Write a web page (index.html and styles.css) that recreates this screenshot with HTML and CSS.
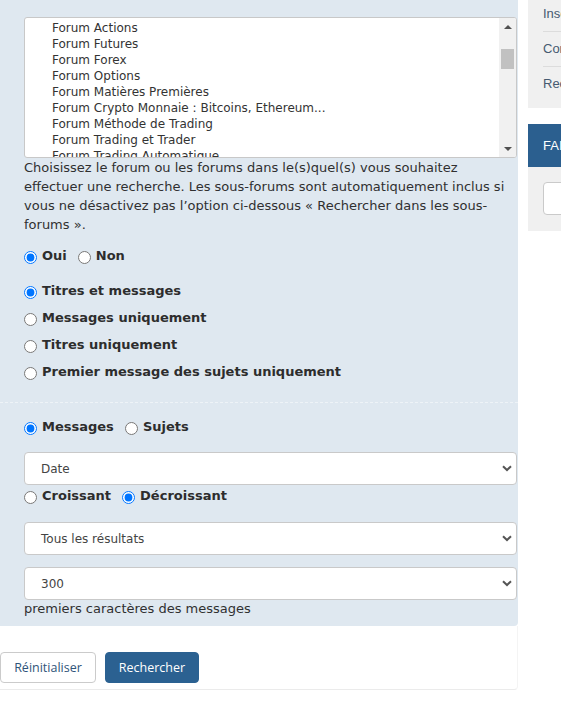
FILE: index.html
```html
<!DOCTYPE html>
<html lang="fr">
<head>
<meta charset="utf-8">
<title>Recherche avancée</title>
<link rel="stylesheet" href="styles.css">
</head>
<body>
<div class="page">
  <main class="main">
    <form class="panel">
      <div class="section">
        <div class="listbox">
          <ul class="options">
            <li>Forum Actions</li>
            <li>Forum Futures</li>
            <li>Forum Forex</li>
            <li>Forum Options</li>
            <li>Forum Matières Premières</li>
            <li>Forum Crypto Monnaie : Bitcoins, Ethereum...</li>
            <li>Forum Méthode de Trading</li>
            <li>Forum Trading et Trader</li>
            <li>Forum Trading Automatique</li>
          </ul>
          <div class="scrollbar">
            <span class="sb-btn"><span class="tri up"></span></span>
            <span class="sb-track"><span class="sb-thumb"></span></span>
            <span class="sb-btn"><span class="tri down"></span></span>
          </div>
        </div>
        <p class="hint">Choisissez le forum ou les forums dans le(s)quel(s) vous souhaitez effectuer une recherche. Les sous-forums sont automatiquement inclus si vous ne désactivez pas l’option ci-dessous « Rechercher dans les sous-forums ».</p>

        <div class="row inline first">
          <label class="opt"><input type="radio" name="sub" checked>Oui</label>
          <label class="opt"><input type="radio" name="sub">Non</label>
        </div>

        <div class="stack">
          <label class="opt"><input type="radio" name="where" checked>Titres et messages</label>
          <label class="opt"><input type="radio" name="where">Messages uniquement</label>
          <label class="opt"><input type="radio" name="where">Titres uniquement</label>
          <label class="opt"><input type="radio" name="where">Premier message des sujets uniquement</label>
        </div>
      </div>

      <div class="section second">
        <div class="row inline">
          <label class="opt"><input type="radio" name="show" checked>Messages</label>
          <label class="opt"><input type="radio" name="show">Sujets</label>
        </div>

        <div class="select s-sort">
          <span>Date</span>
          <svg class="chev" width="10" height="7" viewBox="0 0 10 7"><polyline points="1,1.2 5,5 9,1.2" fill="none" stroke="#555" stroke-width="2"/></svg>
        </div>

        <div class="row inline order">
          <label class="opt"><input type="radio" name="dir">Croissant</label>
          <label class="opt"><input type="radio" name="dir" checked>Décroissant</label>
        </div>

        <div class="select s-range">
          <span>Tous les résultats</span>
          <svg class="chev" width="10" height="7" viewBox="0 0 10 7"><polyline points="1,1.2 5,5 9,1.2" fill="none" stroke="#555" stroke-width="2"/></svg>
        </div>

        <div class="select s-chars">
          <span>300</span>
          <svg class="chev" width="10" height="7" viewBox="0 0 10 7"><polyline points="1,1.2 5,5 9,1.2" fill="none" stroke="#555" stroke-width="2"/></svg>
        </div>
        <p class="note">premiers caractères des messages</p>
      </div>
    </form>

    <div class="actions">
      <button type="button" class="btn">Réinitialiser</button>
      <button type="button" class="btn primary">Rechercher</button>
    </div>
  </main>

  <aside class="sidebar">
    <nav class="side-box links">
      <a href="#">Inscription</a>
      <a href="#">Connexion</a>
      <a href="#">Recherche avancée</a>
    </nav>
    <section class="side-card">
      <h3 class="side-title">FAIRE UN DON</h3>
      <div class="side-body"><div class="side-input"></div></div>
    </section>
  </aside>
</div>
</body>
</html>
```

FILE: styles.css
```css
html, body {
  margin: 0;
  background: #fff;
}

body {
  font-family: "DejaVu Sans", Verdana, sans-serif;
  color: #333;
}

.page {
  display: flex;
  gap: 10px;
  width: 561px;
  height: 723px;
  overflow: hidden;
}

.main {
  width: 518px;
  flex: none;
}

/* search form panel */
.panel {
  background: #dfe8f0;
  border-bottom-right-radius: 4px;
  padding-bottom: 9px;
  margin: 0;
}

.section {
  padding: 17px 1px 0 24px;
}

.section.second {
  margin-top: 21px;
  padding-top: 14px;
  border-top: 1px dashed #eef3f7;
}

/* forum list box */
.listbox {
  display: flex;
  height: 141px;
  box-sizing: border-box;
  border: 1px solid #c8c8c8;
  border-radius: 3px;
  background: #fff;
  overflow: hidden;
}

.options {
  flex: 1;
  list-style: none;
  margin: 0;
  padding: 2px 0 0 27px;
  overflow: hidden;
  font-size: 12px;
  line-height: 16px;
  color: #333;
}

.options li {
  white-space: nowrap;
}

.scrollbar {
  width: 17px;
  flex: none;
  display: flex;
  flex-direction: column;
  background: #f1f1f1;
}

.sb-btn {
  height: 17px;
  display: flex;
  align-items: center;
  justify-content: center;
}

.tri {
  width: 0;
  height: 0;
  border-left: 4px solid transparent;
  border-right: 4px solid transparent;
}

.tri.up {
  border-bottom: 4px solid #505050;
}

.tri.down {
  border-top: 4px solid #505050;
}

.sb-track {
  flex: 1;
  padding-top: 14px;
}

.sb-thumb {
  display: block;
  height: 20px;
  margin: 0 2px;
  background: #c1c1c1;
}

.hint {
  margin: 0;
  font-size: 13px;
  line-height: 19px;
  padding-right: 4px;
  color: #303030;
}

/* radio rows */
.row.inline {
  display: flex;
  gap: 11px;
}

.row.first {
  margin-top: 12px;
}

.stack {
  margin-top: 16px;
  display: flex;
  flex-direction: column;
  gap: 8px;
}

.opt {
  display: block;
  font-size: 13px;
  line-height: 19px;
  font-weight: bold;
  color: #2d2d2d;
  white-space: nowrap;
}

.opt input {
  width: 13px;
  height: 13px;
  margin: 0 5px 0 0;
  vertical-align: -4px;
}

/* select boxes */
.select {
  display: flex;
  align-items: center;
  justify-content: space-between;
  height: 33px;
  box-sizing: border-box;
  padding: 0 4px 0 16px;
  border: 1px solid #c9c9c9;
  border-radius: 4px;
  background: #fff;
  font-size: 12px;
  color: #444;
}

.s-sort {
  margin-top: 16px;
}

.row.order {
  margin-top: 1px;
}

.s-range {
  margin-top: 17px;
}

.s-chars {
  margin-top: 12px;
}

.note {
  margin: 0;
  font-size: 13px;
  line-height: 17px;
  color: #303030;
}

/* buttons under the form */
.actions {
  display: flex;
  gap: 9px;
  padding: 26px 0 6px;
  border-bottom: 1px solid #ebebeb;
  border-right: 1px solid #f4f4f4;
  border-bottom-right-radius: 4px;
}

.btn {
  height: 31px;
  padding: 0 12px;
  border: 1px solid #cbcbcb;
  border-radius: 4px;
  background: #fff;
  color: #2f5479;
  font-family: "Open Sans", "Noto Sans", sans-serif;
  font-size: 12.5px;
  cursor: pointer;
}

.btn:first-child {
  width: 96px;
}

.btn.primary {
  width: 94px;
  background: #2b6191;
  border-color: #2b6191;
  color: #fff;
}

/* right column */
.sidebar {
  flex: 1;
  min-width: 0;
  overflow: hidden;
  font-family: "Liberation Sans", Arial, sans-serif;
}

.side-box {
  background: #f0f0f0;
  padding: 0 0 7px 15px;
  margin-top: -3px;
  width: 220px;
}

.links a {
  display: block;
  padding: 8px 0;
  line-height: 18px;
  font-size: 13px;
  color: #465a70;
  text-decoration: none;
  border-bottom: 1px solid #dcdcdc;
  white-space: nowrap;
}

.links a:last-child {
  border-bottom: 0;
}

.side-card {
  margin-top: 16px;
  width: 220px;
}

.side-title {
  margin: 0;
  height: 43px;
  box-sizing: border-box;
  padding: 0 15px;
  display: flex;
  align-items: center;
  background: #2b5f8f;
  color: #fff;
  font-size: 13px;
  font-weight: normal;
  white-space: nowrap;
}

.side-body {
  background: #f0f0f0;
  padding: 15px 15px 16px;
}

.side-input {
  height: 33px;
  box-sizing: border-box;
  border: 1px solid #cacaca;
  border-radius: 4px;
  background: #fff;
}
```
